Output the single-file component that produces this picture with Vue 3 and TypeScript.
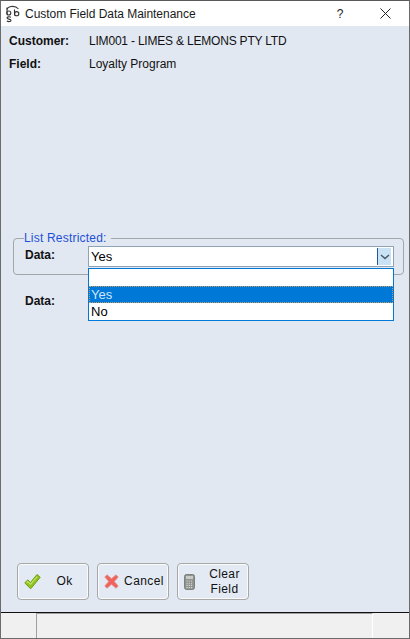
<script setup lang="ts">
const rows = [
  { label: 'Customer:', value: 'LIM001 - LIMES & LEMONS PTY LTD' },
  { label: 'Field:', value: 'Loyalty Program' },
]
const options = [
  { text: '', active: false },
  { text: 'Yes', active: true },
  { text: 'No', active: false },
]
</script>

<template>
  <div class="window">
    <header class="titlebar">
      <svg class="logo" width="16" height="18" viewBox="0 0 16 18" fill="none" stroke="#333" stroke-width="1.1">
        <path d="M2 4.500C3 1 10 0 13.500 4" />
        <path d="M2 2.500v7" />
        <circle cx="3.800" cy="8" r="2" />
        <path d="M9.500 4.500v6" />
        <circle cx="11.700" cy="8.700" r="2.100" />
        <path d="M6 12.200C4.500 11.500 2 11.700 2 13s4 1 4 2.400-2.700 1.500-4.200 .7" />
      </svg>
      <span class="title">Custom Field Data Maintenance</span>
      <span class="help">?</span>
      <svg class="close" width="11" height="11" viewBox="0 0 11 11" stroke="#222" stroke-width="1">
        <path d="M.5.5l10 10M10.500.5l-10 10" />
      </svg>
    </header>

    <main class="content">
      <div class="info">
        <div v-for="row in rows" :key="row.label" class="info-row">
          <span class="label">{{ row.label }}</span>
          <span class="value">{{ row.value }}</span>
        </div>
      </div>

      <fieldset class="group">
        <legend>List Restricted:</legend>
        <div class="group-row">
          <span class="label data-label">Data:</span>
          <div class="combo-wrap">
            <div class="combo">
              <span>Yes</span>
              <span class="arrow">
                <svg width="10" height="6" viewBox="0 0 10 6" fill="none" stroke="#4d5a66" stroke-width="1.5">
                  <path d="M1 1l4 3.600L9 1" />
                </svg>
              </span>
            </div>
            <ul class="dropdown">
              <li v-for="opt in options" :key="opt.text" :class="{ active: opt.active }">{{ opt.text }}</li>
            </ul>
          </div>
        </div>
      </fieldset>

      <div class="second-row"><span class="label">Data:</span></div>

      <footer class="buttons">
        <button class="btn" type="button">
          <svg class="ic-ok" width="17" height="17" viewBox="0 0 17 17">
            <path d="M.8 10l3-3.200 2.700 2.700L13 1.500l3.200 2.800L6.700 15.800z" fill="#8fc31f" stroke="#6f9c14" stroke-width="1" stroke-linejoin="round" />
            <path d="M2.500 9.800l1.300-1.300 2.700 2.800 6.700-7.800" fill="none" stroke="#c9e86a" stroke-width="1.100" />
          </svg>
          <span class="btn-text">Ok</span>
        </button>
        <button class="btn" type="button">
          <svg class="ic-x" width="15" height="15" viewBox="0 0 15 15">
            <path d="M3 .8l4.500 4L12 .8l2.200 2.200-4 4.500 4 4.500-2.200 2.200-4.500-4-4.500 4L.8 12l4-4.500-4-4.500z" fill="#f0625a" stroke="#e08a84" stroke-width=".8" stroke-linejoin="round" />
          </svg>
          <span class="btn-text cancel">Cancel</span>
        </button>
        <button class="btn" type="button">
          <svg class="ic-clear" width="11" height="16" viewBox="0 0 11 16">
            <rect x=".5" y=".5" width="10" height="15" rx="2" fill="#8f938f" stroke="#7c7f7c" />
            <rect x="2" y="2" width="7" height="3" fill="#c8cbc8" />
            <path d="M2.500 7h6M2.500 9.200h6M2.500 11.400h6M2.500 13.600h6" stroke="#d8dad8" stroke-width="1.100" stroke-dasharray="1.200 1" />
          </svg>
          <span class="btn-text clear">Clear<br />Field</span>
        </button>
      </footer>
    </main>

    <div class="statusbar">
      <div class="panel"></div>
    </div>
  </div>
</template>

<style>
html, body { margin: 0; padding: 0; }
</style>

<style scoped>
.window {
  box-sizing: border-box;
  width: 410px;
  height: 639px;
  display: flex;
  flex-direction: column;
  border: 1px solid #6b6b6b;
  border-top-color: #5a5a5a;
  font-family: "Liberation Sans", Arial, sans-serif;
  font-size: 12px;
  color: #000;
  background: #e1e8f2;
}
.titlebar {
  flex: none;
  height: 25px;
  display: flex;
  align-items: center;
  background: #fff;
  padding-left: 4px;
}
.logo { flex: none; margin-right: 4px; }
.title { flex: 1; color: #1a1a1a; font-size: 12px; letter-spacing: -0.03px; }
.help { width: 14px; margin-right: 33px; text-align: center; font-size: 12px; color: #222; }
.close { flex: none; margin-right: 18px; }
.content {
  flex: 1;
  display: flex;
  flex-direction: column;
  padding: 7px 6px 12px 8px;
  min-height: 0;
}
.info { display: flex; flex-direction: column; gap: 7px; }
.info-row { display: flex; height: 16px; align-items: center; }
.label { font-weight: 700; color: #111; }
.info-row .label { width: 80px; }
.value { color: #111; letter-spacing: -0.2px; }
.info-row:last-child .value { letter-spacing: 0; }
.group {
  box-sizing: border-box;
  margin: 159px 0 0 4px;
  padding: 0 9px 0 11px;
  width: 390px;
  height: 44px;
  border: 1px solid #a3a6a8;
  border-radius: 4px;
}
.group legend {
  padding: 0 4px 0 0;
  margin-left: -1px;
  color: #1e4fd8;
  font-size: 12px;
  line-height: 14px;
  letter-spacing: 0.2px;
}
.group-row { display: flex; align-items: flex-start; margin-top: 1px; }
.data-label { width: 63px; padding-top: 2px; }
.combo-wrap { position: relative; width: 306px; }
.combo {
  box-sizing: border-box;
  height: 21px;
  display: flex;
  align-items: center;
  justify-content: space-between;
  padding-left: 2px;
  background: #fff;
  border: 1px solid #8fa3b5;
  font-size: 13px;
}
.arrow {
  width: 13px;
  height: 17px;
  margin-right: 2px;
  display: flex;
  align-items: center;
  justify-content: center;
  background: #c9e2f6;
  border-left: 1px solid #1e5a8e;
}
.dropdown {
  position: absolute;
  top: 22px;
  left: 0;
  right: 0;
  z-index: 2;
  box-sizing: border-box;
  margin: 0;
  padding: 0;
  list-style: none;
  background: #fff;
  border: 1px solid #0078d7;
  height: 53px;
}
.dropdown li {
  box-sizing: border-box;
  height: 17px;
  line-height: 17px;
  padding-left: 2px;
  font-size: 13px;
}
.dropdown li.active {
  background: #0078d7;
  color: #cfe6fa;
  outline: 1px dotted #c89a60;
  outline-offset: -1px;
}
.second-row { margin: 18px 0 0 16px; height: 16px; display: flex; align-items: center; }
.buttons {
  margin-top: auto;
  display: flex;
  gap: 8px;
  padding-left: 8px;
}
.btn {
  box-sizing: border-box;
  width: 72px;
  height: 37px;
  display: flex;
  align-items: center;
  padding: 0 0 0 6px;
  background: #e3eaf3;
  border: 1px solid #a8a8a8;
  border-radius: 4px;
  box-shadow: inset 0 0 0 1px #f8fafc;
  font-family: inherit;
  font-size: 12px;
  color: #111;
}
.btn-text { flex: 1; text-align: center; line-height: 15px; letter-spacing: 0.3px; }
.btn-text.cancel { letter-spacing: 0.4px; padding-left: 1px; }
.btn-text.clear { letter-spacing: 0.4px; padding-left: 6px; }
.statusbar {
  flex: none;
  height: 26px;
  box-sizing: border-box;
  background: #f0f0f0;
  border-top: 1px solid #111;
  padding-left: 35px;
  padding-right: 36px;
}
.panel {
  box-sizing: border-box;
  height: 100%;
  border-left: 1px solid #a0a0a0;
  border-top: 1px solid #a0a0a0;
  border-right: 1px solid #fff;
}
</style>
